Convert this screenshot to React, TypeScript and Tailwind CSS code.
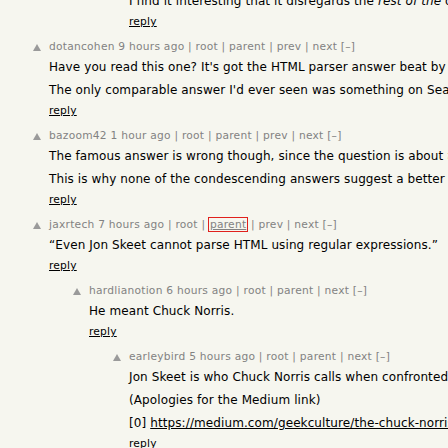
import type { ReactNode } from "react";

type Comment = {
    level: number;
    user: string;
    age: string;
    links: string[];
    paras: ReactNode[];
    focus?: string;
};

const indent = ["w-0", "w-[40px]", "w-[80px]"];

const comments: Comment[] = [
    {
        level: 2,
        user: "jbm",
        age: "8 hours ago",
        links: ["root", "parent", "next"],
        paras: [
            <>I find it interesting that it disregards the <i>rest of the</i> document</>,
        ],
    },
    {
        level: 0,
        user: "dotancohen",
        age: "9 hours ago",
        links: ["root", "parent", "prev", "next"],
        paras: [
            "Have you read this one? It's got the HTML parser answer beat by a mile.",
            "The only comparable answer I'd ever seen was something on Seasoned Advice.",
        ],
    },
    {
        level: 0,
        user: "bazoom42",
        age: "1 hour ago",
        links: ["root", "parent", "prev", "next"],
        paras: [
            <>The famous answer is wrong though, since the question is about <i>tags</i>, not documents.</>,
            "This is why none of the condescending answers suggest a better way.",
        ],
    },
    {
        level: 0,
        user: "jaxrtech",
        age: "7 hours ago",
        links: ["root", "parent", "prev", "next"],
        focus: "parent",
        paras: ["\u201cEven Jon Skeet cannot parse HTML using regular expressions.\u201d"],
    },
    {
        level: 1,
        user: "hardlianotion",
        age: "6 hours ago",
        links: ["root", "parent", "next"],
        paras: ["He meant Chuck Norris."],
    },
    {
        level: 2,
        user: "earleybird",
        age: "5 hours ago",
        links: ["root", "parent", "next"],
        paras: [
            "Jon Skeet is who Chuck Norris calls when confronted with regular expressions.",
            "(Apologies for the Medium link)",
            <>[0] <a href="#" className="underline text-black">https://medium.com/geekculture/the-chuck-norris-facts</a></>,
        ],
    },
];

const VoteArrow = () => (
    <svg width="8" height="7" viewBox="0 0 8 7" className="mt-[4px]">
        <polygon points="4,0 8,7 0,7" fill="#9a9a9a" />
    </svg>
);

const CommentRow = ({ c }: { c: Comment }) => (
    <div className="flex mb-[12px]">
        <div className={indent[c.level] + " shrink-0"} />
        <div className="w-[49px] shrink-0 flex justify-end pr-[8px] items-start">
            <VoteArrow />
        </div>
        <div className="flex flex-col">
            <div className="h-[14px] leading-[14px] text-[10.67px] tracking-[0.25px] text-[#828282]">
                {c.user} {c.age}
                {c.links.map((l) => (
                    <span key={l}>
                        {" | "}
                        {c.focus === l ? (
                            <span className="underline outline outline-1 outline-[#e0201c] px-[1px]">{l}</span>
                        ) : (
                            l
                        )}
                    </span>
                ))}{" "}
                [–]
            </div>
            <div className="mt-[6px] flex flex-col gap-[8px] text-[12px] leading-[15px] tracking-[0.1px] text-black">
                {c.paras.map((p, i) => (
                    <p key={i}>{p}</p>
                ))}
            </div>
            <div className="mt-[7px] h-[12px] leading-[12px] text-[10.67px] tracking-[0.2px]">
                <a href="#" className="underline text-black">reply</a>
            </div>
        </div>
    </div>
);

export default function App() {
    return (
        <div className="w-[448px] h-[448px] overflow-hidden bg-[#f6f6ef] font-['DejaVu_Sans',Verdana,sans-serif]">
            <div className="-mt-[26px] whitespace-nowrap">
                {comments.map((c) => (
                    <CommentRow key={c.user} c={c} />
                ))}
            </div>
        </div>
    );
}
